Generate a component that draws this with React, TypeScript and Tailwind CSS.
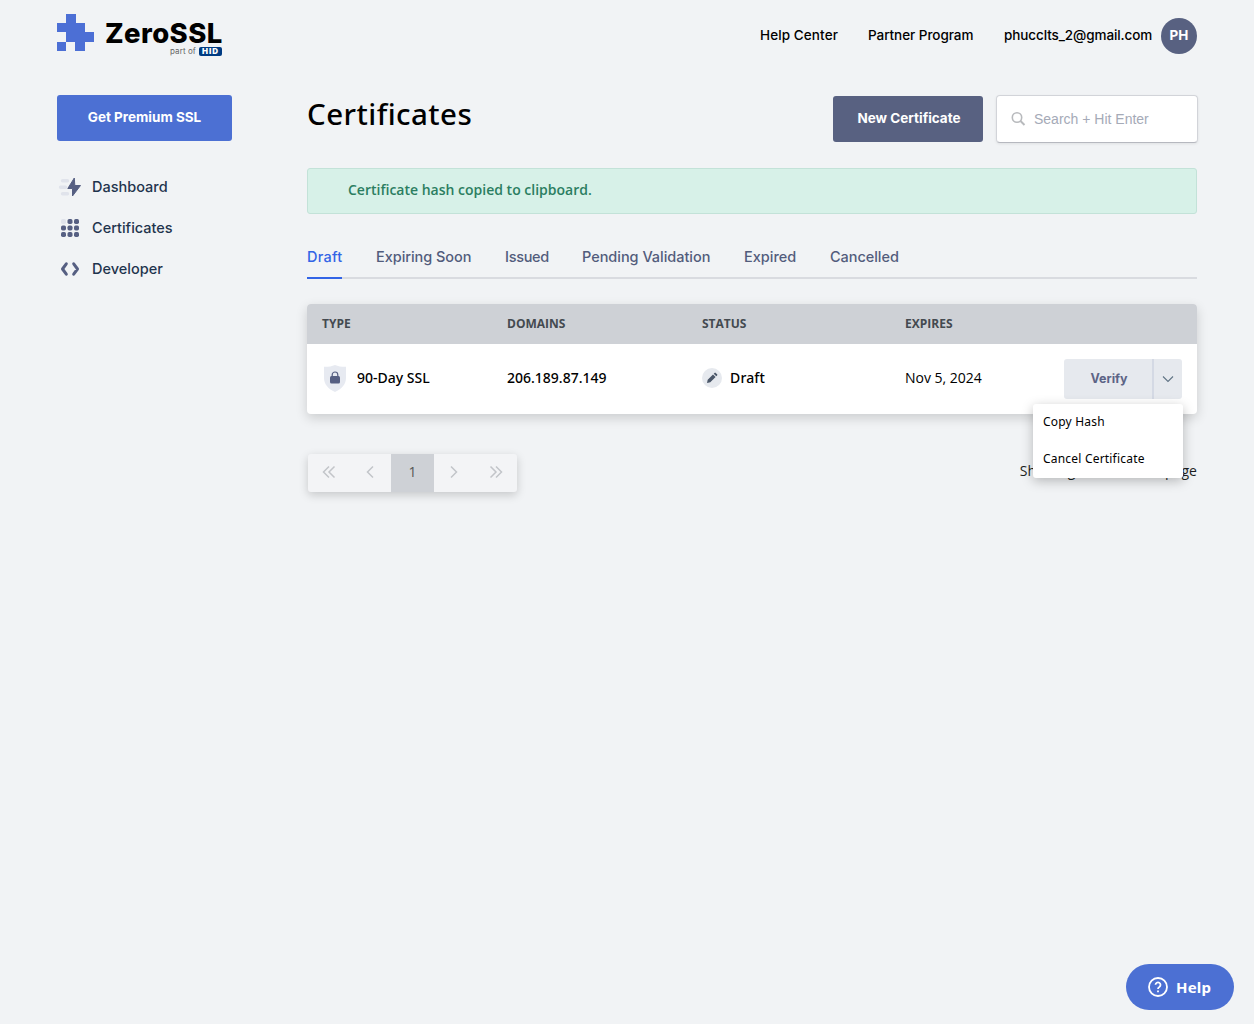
import React from "react";

const navItems = ["Dashboard", "Certificates", "Developer"];

const tabs = [
  { label: "Expiring Soon", cls: "ml-[34px] w-[95px] tracking-[-0.05px]" },
  { label: "Issued", cls: "ml-[34px] w-[43px] tracking-[-0.3px]" },
  { label: "Pending Validation", cls: "ml-[34px] w-[128px] tracking-[-0.03px]" },
  { label: "Expired", cls: "ml-[34px] w-[52px]" },
  { label: "Cancelled", cls: "ml-[34px] w-[69px] tracking-[-0.05px]" },
];

function Logo() {
  return (
    <div className="flex h-[43px] w-[170px] items-start">
      <svg className="mt-[1px] h-[37px] w-[37px] shrink-0" viewBox="0 0 37 37" fill="#4c6fd5" shapeRendering="crispEdges">
        <path d="M9 0h10v9h9v9h9v10h-9v9h-10v-9H9V18H0V9h9zM0 28h9v9H0z" />
      </svg>
      <div className="ml-[11px] w-[120px] font-[Inter]">
        <div className="mt-[10px] h-[23px] text-[27.5px] leading-[21px] font-extrabold tracking-[0.4px] text-black">ZeroSSL</div>
        <div className="flex items-center pt-[1px] pl-[65px]">
          <span className="w-[29px] text-[8px] leading-[9px] tracking-[0.1px] text-[#666]">part of</span>
          <span className="flex h-[9px] w-[23px] items-center justify-center rounded-[2px] bg-[#003b82] text-[8px] leading-[9px] font-black tracking-[0.9px] text-white">HID</span>
        </div>
      </div>
    </div>
  );
}

function NavIcon({ name }: { name: string }) {
  if (name === "Dashboard")
    return (
      <svg className="-mt-[2px] h-6 w-6" viewBox="0 0 24 24">
        <g stroke="#e0e3eb" strokeWidth="3.4" strokeLinecap="round">
          <path d="M5.500 5.800h5M3.500 12.300h5M5.500 18.800h5" />
        </g>
        <path d="M17.300 3 10.800 13.500h4.700L15.500 21 23.500 10.500H17.800z" fill="#565f82" stroke="#565f82" strokeWidth="1" strokeLinejoin="round" />
      </svg>
    );
  if (name === "Certificates")
    return (
      <svg className="-mt-[1px] h-6 w-6" viewBox="0 0 24 24">
        {[0, 1, 2, 3, 4, 5, 6, 7, 8].map((i) => (
          <rect key={i} x={4 + (i % 3) * 6.5} y={3 + Math.floor(i / 3) * 6.5} width="5" height="5" rx="1.7" fill={i === 0 ? "#e0e3eb" : "#565f82"} />
        ))}
      </svg>
    );
  return (
    <svg className="-mt-[1px] h-6 w-6" viewBox="0 0 24 24" fill="none" stroke="#565f82" strokeWidth="3" strokeLinecap="round" strokeLinejoin="round">
      <path d="M9.300 6.800 5.500 12l3.800 5.200M16.700 6.800 20.500 12l-3.800 5.200" />
    </svg>
  );
}

function Chevron({ d }: { d: string }) {
  return (
    <svg className="-mt-[2px] h-[14px] w-[14px]" viewBox="0 0 14 14" fill="none" stroke="#c2c5c9" strokeWidth="1.5">
      <path d={d} />
    </svg>
  );
}

export default function App() {
  return (
    <div className="relative h-[1024px] w-[1254px] overflow-hidden bg-[#f1f3f5] font-['Open_Sans',sans-serif] text-sm whitespace-nowrap text-black">
      <header className="flex h-[72px] items-start justify-between pt-[13px] pr-[57px] pl-[57px]">
        <Logo />
        <div className="mt-[5px] flex h-9 items-center font-[Inter] text-[13.5px] leading-5 font-medium">
          <span className="w-[108px] pb-[2px] tracking-[0.1px]">Help Center</span>
          <span className="w-[136px] pb-[2px] tracking-[-0.05px]">Partner Program</span>
          <span className="w-[157px] pb-[2px] tracking-[-0.1px]">phucclts_2@gmail.com</span>
          <span className="flex h-9 w-9 items-center justify-center rounded-full bg-[#586181] pb-[2px] text-[13.5px] font-bold text-white">PH</span>
        </div>
      </header>

      <div className="flex pl-[57px]">
        <aside className="w-[250px] pt-[23px]">
          <button className="block h-[46px] w-[175px] rounded-[3px] bg-[#4c70d3] font-[Inter] text-[13.5px] font-bold text-white">Get Premium SSL</button>
          <nav className="mt-[26px]">
            {navItems.map((item) => (
              <a key={item} className="flex h-[41px] items-center font-[Inter] text-[14.5px] font-medium text-[#1f344d]">
                <NavIcon name={item} />
                <span className="ml-[11px]">{item}</span>
              </a>
            ))}
          </nav>
        </aside>

        <main className="w-[891px]">
          <div className="flex pt-[23px]">
            <h1 className="w-[526px] font-['Noto_Sans'] text-[29.5px] leading-[38px] font-medium tracking-[0.45px]">Certificates</h1>
            <button className="mt-[1px] h-[46px] w-[150px] rounded-[3px] bg-[#586181] pl-[2px] font-[Inter] text-[13.5px] font-bold text-white">New Certificate</button>
            <div className="ml-[13px] flex h-[48px] w-[202px] items-center rounded-[4px] border border-[#d2d4d9] border-b-[#b6b8bf] bg-white pl-[14px] shadow-[0_1px_3px_rgba(0,0,0,0.08)]">
              <svg className="h-4 w-4" viewBox="0 0 16 16" fill="none" stroke="#b8babd" strokeWidth="1.6">
                <circle cx="6" cy="6.500" r="4.700" />
                <path d="m9.500 10 4 4" strokeWidth="2" />
              </svg>
              <span className="ml-[7px] font-['Liberation_Sans'] text-[14px] text-[#a5aab7]">Search + Hit Enter</span>
            </div>
          </div>

          <div className="mt-[25px] flex h-[46px] w-[890px] items-center rounded-[3px] border border-[#c3e2d8] bg-[#d7f1e8] pb-[2px] pl-10 text-[14px] font-semibold text-[#2b7e61]">
            <span>Certificate hash copied to clipboard.</span>
          </div>

          <div className="mt-[30px] flex h-[35px] w-[890px] border-b-2 border-[#d9dbe0] font-[Inter] text-[14.5px] leading-[26px] font-medium text-[#525c7c]">
            <span className="h-[35px] w-[35px] border-b-2 border-[#3264e6] tracking-[0.25px] text-[#3264e6]">Draft</span>
            {tabs.map((t) => (
              <span key={t.label} className={t.cls}>{t.label}</span>
            ))}
          </div>

          <section className="relative mt-[25px] h-[110px] w-[890px] rounded-[4px] bg-white shadow-[0_4px_12px_rgba(0,0,0,0.16)]">
            <div className="flex h-10 items-center rounded-t-[4px] bg-[#ced1d6] pl-[15px] text-[12px] font-bold text-[#444a50]">
              <span className="w-[185px]">TYPE</span>
              <span className="w-[195px]">DOMAINS</span>
              <span className="w-[203px]">STATUS</span>
              <span>EXPIRES</span>
            </div>
            <div className="flex h-[70px] items-center pl-[15px] text-[14px]">
              <div className="flex w-[185px] items-center">
                <svg className="-mt-[2px] mr-[9px] h-7 w-[26px]" viewBox="0 0 26 28">
                  <path d="M13 1c3.500 1.500 7.500 2 11 1.800V14c0 6.500-4.500 11-11 14C6.500 25 2 20.500 2 14V2.800C5.500 3 9.500 2.500 13 1z" fill="#e7eaf1" />
                  <path d="M10.200 13v-2.200a2.800 2.800 0 0 1 5.600 0V13" fill="none" stroke="#565f82" strokeWidth="1.200" />
                  <rect x="8" y="12" width="10" height="7.500" rx="1.500" fill="#565f82" />
                </svg>
                <span className="pb-[2px] font-['Noto_Sans'] font-medium">90-Day SSL</span>
              </div>
              <span className="w-[195px] pb-[2px] font-['Noto_Sans'] font-medium">206.189.87.149</span>
              <div className="flex w-[203px] items-center pb-[2px] font-['Noto_Sans'] font-medium">
                <span className="mr-2 flex h-5 w-5 items-center justify-center rounded-full bg-[#e6e9ee]">
                  <svg className="h-3 w-3" viewBox="0 0 12 12" fill="#4a5668">
                    <path d="M1 11l.7-3.300L7 2.400 9.600 5 4.300 10.300zM7.700 1.700 8.500.9q.6-.6 1.200 0l1.400 1.400q.6.600 0 1.200l-.8.800z" />
                  </svg>
                </span>
                <span className="tracking-[0.15px]">Draft</span>
              </div>
              <span className="w-[159px] pb-[2px]">Nov 5, 2024</span>
              <div className="flex h-10 w-[118px] overflow-hidden rounded-[3px] bg-[#e6e9ee]">
                <span className="flex w-[90px] items-center justify-center border-r-2 border-[#d4d9e4] pl-[2px] font-[Inter] text-[12.5px] font-bold tracking-[-0.05px] text-[#5c6486]">Verify</span>
                <span className="flex w-7 items-center justify-center">
                  <svg className="h-3 w-3" viewBox="0 0 12 12" fill="none" stroke="#5f7384" strokeWidth="1.100"><path d="m1 3.500 5 5 5-5" /></svg>
                </span>
              </div>
            </div>
            <div className="absolute top-[100px] left-[726px] z-10 h-[74px] w-[150px] rounded-[3px] bg-white px-[10px] font-['Noto_Sans'] text-[12px] tracking-[0.2px] shadow-[0_3px_12px_rgba(0,0,0,0.25)]">
              <div className="flex h-9 items-center">Copy Hash</div>
              <div className="flex h-[38px] items-center">Cancel Certificate</div>
            </div>
          </section>

          <div className="mt-10 flex w-[890px] items-start justify-between">
            <div className="ml-[1px] flex h-[38px] w-[209px] overflow-hidden rounded-[3px] bg-[#f3f4f6] shadow-[0_3px_10px_rgba(0,0,0,0.18)]">
              <span className="flex w-[42px] items-center justify-center"><Chevron d="M7 1.500 1.500 7 7 12.500M12.500 1.500 7 7l5.500 5.500" /></span>
              <span className="flex w-[41px] items-center justify-center"><Chevron d="M9 1.500 3.500 7l5.500 5.500" /></span>
              <span className="flex w-[43px] items-center justify-center bg-[#ced1d6] pb-[2px] text-[#555]">1</span>
              <span className="flex w-10 items-center justify-center"><Chevron d="M4 1.500 9.500 7l-5.500 5.500" /></span>
              <span className="flex w-[43px] items-center justify-center"><Chevron d="M1.500 1.500 7 7l-5.500 5.500M7 1.500 12.500 7 7 12.500" /></span>
            </div>
            <span className="mt-[7px] leading-5 tracking-[0.06px] text-[#1c1f22]">Showing 1 result on 1 page</span>
          </div>
        </main>
      </div>

      <button className="absolute right-5 bottom-[14px] flex h-[46px] w-[108px] items-center rounded-full bg-[#4c70d3] pl-[22px] font-['Noto_Sans'] text-[15px] font-bold tracking-[0.2px] text-white">
        <svg className="mr-2 h-5 w-5" viewBox="0 0 20 20" fill="none" stroke="white" strokeWidth="1.800">
          <circle cx="10" cy="10" r="9" />
          <path d="M7.500 7.800a2.500 2.500 0 1 1 3.800 2.200Q10 10.700 10 12" />
          <path d="M10 13.500v1.700" />
        </svg>
        <span className="pt-[2px]">Help</span>
      </button>
    </div>
  );
}
